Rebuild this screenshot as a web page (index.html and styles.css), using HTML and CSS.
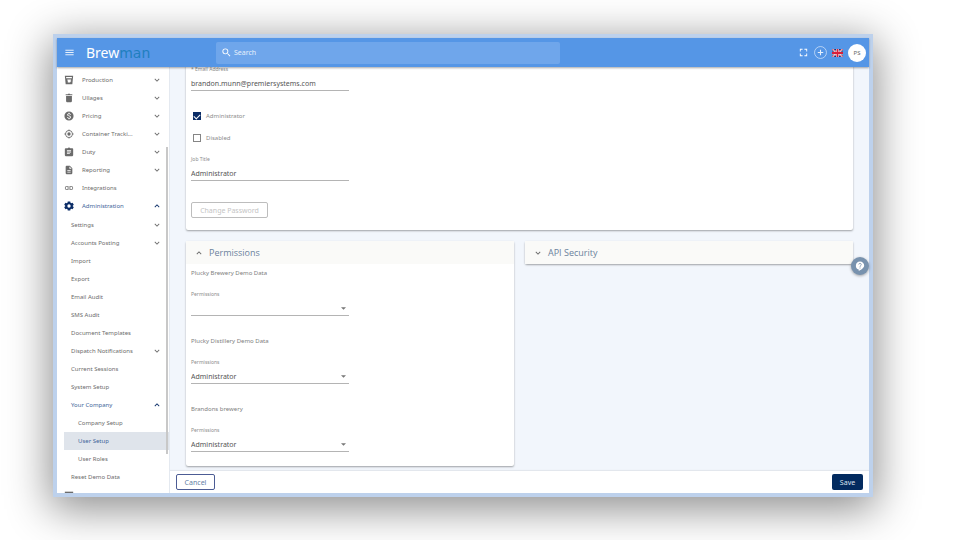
FILE: index.html
```html
<!DOCTYPE html>
<html lang="en">
<head>
  <meta charset="UTF-8">
  <title>Brewman - User Setup</title>
  <link rel="stylesheet" href="styles.css">
</head>
<body>
  <!-- shared chevron shapes -->
  <svg class="defs" aria-hidden="true">
    <symbol id="down" viewBox="0 0 24 24"><path d="M7.4 8.6 12 13.2l4.6-4.6L18 10l-6 6-6-6z"/></symbol>
    <symbol id="up" viewBox="0 0 24 24"><path d="M7.4 15.4 12 10.8l4.6 4.6L18 14l-6-6-6 6z"/></symbol>
  </svg>

  <div class="window">
    <header class="topbar">
      <button class="icon-btn menu" aria-label="Menu">
        <svg viewBox="0 0 24 24"><path d="M3 18h18v-2H3v2zm0-5h18v-2H3v2zm0-7v2h18V6H3z"/></svg>
      </button>
      <a class="logo" href="#">Brew<span>man</span></a>
      <label class="search">
        <svg viewBox="0 0 24 24"><path d="M15.5 14h-.79l-.28-.27A6.47 6.47 0 0 0 16 9.5 6.5 6.5 0 1 0 9.5 16c1.61 0 3.09-.59 4.23-1.57l.27.28v.79l5 4.99L20.49 19l-4.99-5zm-6 0C7.01 14 5 11.99 5 9.5S7.01 5 9.5 5 14 7.01 14 9.5 11.99 14 9.5 14z"/></svg>
        <input type="text" placeholder="Search" aria-label="Search">
      </label>
      <div class="tools">
        <button class="icon-btn" aria-label="Fullscreen">
          <svg viewBox="0 0 24 24"><path d="M4 4h6v2H6v4H4zM14 4h6v6h-2V6h-4zM4 14h2v4h4v2H4zM18 14h2v6h-6v-2h4z"/></svg>
        </button>
        <button class="icon-btn add" aria-label="Add">
          <svg viewBox="0 0 24 24"><circle cx="12" cy="12" r="11" fill="none" stroke="currentColor" stroke-width="1.2"/><path d="M11 7h2v4h4v2h-4v4h-2v-4H7v-2h4z"/></svg>
        </button>
        <button class="icon-btn flag" aria-label="Language">
          <svg viewBox="0 0 22 16">
            <path fill="#1c3578" d="M0 0h22v16H0z"/>
            <path stroke="#fff" stroke-width="3" d="m0 0 22 16M22 0 0 16"/>
            <path stroke="#d8203a" stroke-width="1.5" d="m0 0 22 16M22 0 0 16"/>
            <path stroke="#fff" stroke-width="5.500" d="M11 0v16M0 8h22"/>
            <path stroke="#d8203a" stroke-width="3.600" d="M11 0v16M0 8h22"/>
          </svg>
        </button>
        <button class="avatar">PS</button>
      </div>
    </header>

    <div class="body">
      <nav class="sidebar">
        <a class="item" href="#">
          <svg class="icon" viewBox="0 0 24 24"><path fill-rule="evenodd" d="M2 2h20l-2 20H4L2 2zm3 3 .3 3h13.400L19 5H5zm3 6v2h1v5h6v-2h2v-5H8zm7 2h1v2h-1v-2z"/></svg>
          <span>Production</span><svg class="arrow"><use href="#down"/></svg>
        </a>
        <a class="item" href="#">
          <svg class="icon" viewBox="0 0 24 24"><path d="M5 7h14v13c0 1.100-.9 2-2 2H7c-1.100 0-2-.9-2-2V7zM4 3h5l1-1h4l1 1h5v2.500H4z"/></svg>
          <span>Ullages</span><svg class="arrow"><use href="#down"/></svg>
        </a>
        <a class="item" href="#">
          <svg class="icon" viewBox="0 0 24 24"><path fill-rule="evenodd" d="M12 1a11 11 0 1 0 0 22 11 11 0 0 0 0-22zm1.410 17.090V20h-2.670v-1.930c-1.710-.36-3.160-1.460-3.270-3.400h1.960c.1 1.050.82 1.870 2.650 1.870 1.960 0 2.400-.98 2.400-1.590 0-.83-.44-1.610-2.670-2.140-2.480-.6-4.180-1.620-4.180-3.670 0-1.720 1.390-2.840 3.110-3.210V4h2.670v1.950c1.860.45 2.790 1.860 2.850 3.390H14.300c-.05-1.110-.64-1.870-2.220-1.870-1.500 0-2.400.68-2.400 1.640 0 .84.65 1.390 2.670 1.910s4.180 1.390 4.180 3.910c-.01 1.830-1.380 2.830-3.120 3.160z"/></svg>
          <span>Pricing</span><svg class="arrow"><use href="#down"/></svg>
        </a>
        <a class="item" href="#">
          <svg class="icon" viewBox="0 0 24 24"><path fill-rule="evenodd" d="M12 8a4 4 0 1 0 0 8 4 4 0 0 0 0-8zm8.940 3A8.990 8.990 0 0 0 13 3.060V1h-2v2.060A8.990 8.990 0 0 0 3.060 11H1v2h2.060A8.990 8.990 0 0 0 11 20.940V23h2v-2.060A8.990 8.990 0 0 0 20.940 13H23v-2h-2.060zM12 19a7 7 0 1 1 0-14 7 7 0 0 1 0 14z"/></svg>
          <span>Container Tracki...</span><svg class="arrow"><use href="#down"/></svg>
        </a>
        <a class="item" href="#">
          <svg class="icon" viewBox="0 0 24 24"><path fill-rule="evenodd" d="M4 3h5c.4-1.200 1.500-2 3-2s2.600.8 3 2h5c1.100 0 2 .9 2 2v15c0 1.100-.9 2-2 2H4c-1.100 0-2-.9-2-2V5c0-1.100.9-2 2-2zm3 4v2h10V7H7zm0 4v2h10v-2H7zm0 4v2h7v-2H7z"/></svg>
          <span>Duty</span><svg class="arrow"><use href="#down"/></svg>
        </a>
        <a class="item" href="#">
          <svg class="icon" viewBox="0 0 24 24"><path fill-rule="evenodd" d="M14 2H6c-1.100 0-2 .9-2 2v16c0 1.100.9 2 2 2h12c1.100 0 2-.9 2-2V8l-6-6zm2 16H8v-2h8v2zm0-4H8v-2h8v2zm-3-5V3.500L18.500 9H13z"/></svg>
          <span>Reporting</span><svg class="arrow"><use href="#down"/></svg>
        </a>
        <a class="item" href="#">
          <svg class="icon" viewBox="0 0 24 24"><path d="M3.900 12A3.100 3.100 0 0 1 7 8.900h4V7H7a5 5 0 0 0 0 10h4v-1.900H7A3.100 3.100 0 0 1 3.900 12zM8 13h8v-2H8v2zm9-6h-4v1.900h4a3.100 3.100 0 0 1 0 6.200h-4V17h4a5 5 0 0 0 0-10z"/></svg>
          <span>Integrations</span>
        </a>
        <a class="item open" href="#">
          <svg class="icon" viewBox="0 0 24 24"><path fill-rule="evenodd" d="M9 1h6l.6 3.200 1.800 1L20.500 4l3 5.200-2.500 2v1.600l2.500 2-3 5.200-3.100-1.200-1.800 1L15 23H9l-.6-3.200-1.800-1L3.500 20l-3-5.200 2.500-2v-1.600l-2.500-2 3-5.200 3.100 1.200 1.800-1zM12 8a4 4 0 1 0 0 8 4 4 0 0 0 0-8z"/></svg>
          <span>Administration</span><svg class="arrow"><use href="#up"/></svg>
        </a>
        <div class="submenu">
          <a class="item sub" href="#"><span>Settings</span><svg class="arrow"><use href="#down"/></svg></a>
          <a class="item sub" href="#"><span>Accounts Posting</span><svg class="arrow"><use href="#down"/></svg></a>
          <a class="item sub" href="#"><span>Import</span></a>
          <a class="item sub" href="#"><span>Export</span></a>
          <a class="item sub" href="#"><span>Email Audit</span></a>
          <a class="item sub" href="#"><span>SMS Audit</span></a>
          <a class="item sub" href="#"><span>Document Templates</span></a>
          <a class="item sub" href="#"><span>Dispatch Notifications</span><svg class="arrow"><use href="#down"/></svg></a>
          <a class="item sub" href="#"><span>Current Sessions</span></a>
          <a class="item sub" href="#"><span>System Setup</span></a>
          <a class="item sub open" href="#"><span>Your Company</span><svg class="arrow"><use href="#up"/></svg></a>
          <a class="item leaf" href="#"><span>Company Setup</span></a>
          <a class="item leaf active" href="#"><span>User Setup</span></a>
          <a class="item leaf" href="#"><span>User Roles</span></a>
          <a class="item sub" href="#"><span>Reset Demo Data</span></a>
        </div>
        <a class="item" href="#">
          <svg class="icon" viewBox="0 0 24 24"><path d="M2 4h20v16H2z"/></svg>
          <span>Website</span>
        </a>
        <div class="thumb"></div>
      </nav>

      <div class="page">
        <main class="content">
          <div class="scrolled">
            <section class="card user">
              <div class="field">
                <label for="email">* Email Address</label>
                <input id="email" type="text" value="brandon.munn@premiersystems.com">
              </div>
              <label class="check first"><input type="checkbox" checked>Administrator</label>
              <label class="check"><input type="checkbox">Disabled</label>
              <div class="field">
                <label for="job">Job Title</label>
                <input id="job" type="text" value="Administrator">
              </div>
              <button class="btn change" disabled>Change Password</button>
            </section>

            <div class="columns">
              <section class="card">
                <button class="card-head"><svg class="arrow"><use href="#up"/></svg>Permissions</button>
                <div class="perms">
                  <h3>Plucky Brewery Demo Data</h3>
                  <div class="field">
                    <label for="perm1">Permissions</label>
                    <select id="perm1"><option></option><option>Administrator</option></select>
                  </div>
                  <h3>Plucky Distillery Demo Data</h3>
                  <div class="field">
                    <label for="perm2">Permissions</label>
                    <select id="perm2"><option>Administrator</option></select>
                  </div>
                  <h3>Brandons brewery</h3>
                  <div class="field">
                    <label for="perm3">Permissions</label>
                    <select id="perm3"><option>Administrator</option></select>
                  </div>
                </div>
              </section>
              <section class="card">
                <button class="card-head"><svg class="arrow"><use href="#down"/></svg>API Security</button>
              </section>
            </div>
          </div>
        </main>
        <footer class="actions">
          <button class="btn cancel">Cancel</button>
          <button class="btn save">Save</button>
        </footer>
      </div>
    </div>

    <button class="help" aria-label="Help">
      <svg viewBox="0 0 24 24"><path fill="#fff" d="M12 1a10 10 0 0 0-3 19.500V24c5-2 13-7 13-13A10 10 0 0 0 12 1z"/><path fill="none" stroke="#7892ae" stroke-width="2" d="M9 8.500c0-4 6-4 6 0 0 2.500-3 2.500-3 5.500M12 15.500v2.500"/></svg>
    </button>
  </div>
</body>
</html>
```

FILE: styles.css
```css
* {
  box-sizing: border-box;
}

body {
  margin: 0;
  height: 100vh;
  padding: 34px 87px 43px 53px;
  background: #fff;
  font-family: "Noto Sans", sans-serif;
  font-size: 6px;
  color: #6c6c6c;
  overflow: hidden;
}

button,
input,
select {
  font: inherit;
  color: inherit;
  margin: 0;
  padding: 0;
  border: 0;
  background: none;
}

a {
  color: inherit;
  text-decoration: none;
}

svg {
  fill: currentColor;
  display: block;
}

.defs {
  position: absolute;
  width: 0;
  height: 0;
}

.window {
  position: relative;
  height: 100%;
  display: flex;
  flex-direction: column;
  border: 4px solid #bdd1ec;
  box-shadow: 0 9px 40px 3px rgba(0, 0, 0, 0.45);
}

/* top bar */
.topbar {
  position: relative;
  z-index: 2;
  flex: none;
  display: flex;
  align-items: center;
  height: 29px;
  padding: 0 3px 0 7px;
  background: #5596e6;
  color: #fff;
  box-shadow: 0 1px 2px rgba(0, 0, 0, 0.35);
}

.icon-btn svg {
  width: 11px;
  height: 11px;
}

.menu,
.add {
  color: #e6f0fc;
}

.logo {
  width: 130px;
  margin-left: 11px;
  font-size: 14px;
  line-height: 20px;
}

.logo span {
  font-family: "DejaVu Sans", sans-serif;
  color: #1f7fbf;
}

.search {
  display: flex;
  align-items: center;
  gap: 2px;
  flex: 0 1 344px;
  height: 22px;
  padding-left: 5px;
  border-radius: 2px;
  background: #6fa6eb;
}

.search svg {
  width: 11px;
  height: 11px;
}

.search input {
  flex: 1;
  font-size: 7px;
  outline: none;
}

.search input::placeholder {
  color: #e6f0fc;
  opacity: 1;
}

.tools {
  display: flex;
  align-items: center;
  gap: 5px;
  margin-left: auto;
}

.add svg {
  width: 13px;
  height: 13px;
}

.flag svg {
  width: 11px;
  height: 8px;
}

.avatar {
  width: 18px;
  height: 18px;
  border-radius: 50%;
  background: #fff;
  color: #666;
}

.body {
  flex: 1;
  display: flex;
  min-height: 0;
}

/* side menu */
.sidebar {
  position: relative;
  flex: none;
  width: 113px;
  padding: 4px 0 0 7px;
  background: #fff;
  border-right: 1px solid #e4e9f0;
  overflow: hidden;
}

.item {
  display: flex;
  align-items: center;
  height: 18px;
  padding-right: 7px;
  line-height: 10px;
}

.item .icon {
  width: 10px;
  height: 10px;
  margin-right: 8px;
  color: #6b6b6b;
}

.arrow {
  width: 10px;
  height: 10px;
}

.item .arrow {
  margin-left: auto;
}

.submenu {
  margin-top: 1px;
}

.sub {
  padding-left: 7px;
}

.leaf {
  padding-left: 14px;
}

.open {
  color: #41659a;
}

.open .icon,
.open .arrow {
  color: #0a2c66;
}

.active {
  background: #dfe4eb;
  color: #41659a;
}

.thumb {
  position: absolute;
  top: 80px;
  right: 1px;
  width: 2px;
  height: 307px;
  background: #c8c8c8;
}

/* page */
.page {
  flex: 1;
  display: flex;
  flex-direction: column;
  min-width: 0;
  background: #f2f6fc;
}

.content {
  flex: 1;
  min-height: 0;
  padding: 0 16px;
  overflow: hidden;
}

.scrolled {
  margin-top: -10px;
}

.card {
  background: #fff;
  border-radius: 2px;
  box-shadow: 0 1px 2px rgba(0, 0, 0, 0.35);
}

.user {
  padding: 8px 5px 12px;
}

.columns {
  display: grid;
  grid-template-columns: 1fr 1fr;
  align-items: start;
  gap: 11px;
  margin-top: 11px;
}

.field {
  width: 158px;
}

.field label {
  display: block;
  margin-bottom: 3px;
  font-size: 5px;
  line-height: 8px;
  color: #8c8c8c;
}

.field input,
.field select {
  display: block;
  width: 100%;
  height: 15px;
  border-bottom: 1px solid #b4b4b4;
  border-radius: 0;
  font-size: 7px;
  color: #555;
  outline: none;
}

.field select {
  appearance: none;
  background: url("data:image/svg+xml,%3Csvg xmlns='http://www.w3.org/2000/svg' viewBox='0 0 10 5'%3E%3Cpath fill='%23777' d='M0 0h10L5 5z'/%3E%3C/svg%3E") right 3px center / 5px 3px no-repeat;
}

.check {
  display: flex;
  align-items: center;
  gap: 5px;
  height: 10px;
  margin-bottom: 12px;
  padding-left: 2px;
  color: #8c8c8c;
}

.first {
  margin-top: 20px;
}

.check input {
  appearance: none;
  width: 8px;
  height: 8px;
  border: 1px solid #858585;
}

.check input:checked {
  display: grid;
  place-items: center;
  border-color: #0a2c66;
  background: #0a2c66;
}

.check input:checked::before {
  content: "";
  width: 5px;
  height: 3px;
  margin-bottom: 1px;
  border: solid #fff;
  border-width: 0 0 1px 1px;
  transform: rotate(-45deg);
}

.btn {
  height: 16px;
  border-radius: 2px;
}

.change {
  width: 77px;
  display: block;
  margin-top: 21px;
  border: 1px solid #bdbdbd;
  font-size: 7px;
  color: #c4c4c4;
}

.card-head {
  display: flex;
  align-items: center;
  gap: 5px;
  width: 100%;
  height: 23px;
  padding-left: 8px;
  background: #fafaf8;
  font-family: "Open Sans", "Noto Sans", sans-serif;
  font-size: 9px;
  color: #6b829d;
}

.card-head .arrow {
  color: #666;
}

.perms {
  padding: 4px 5px 14px;
}

.perms h3 {
  margin: 20px 0 12px;
  font-size: 6px;
  font-weight: 400;
  line-height: 10px;
  color: #808080;
}

.perms h3:first-child {
  margin-top: 0;
}

.actions {
  flex: none;
  display: flex;
  align-items: center;
  justify-content: space-between;
  height: 22px;
  padding: 0 6px;
  background: #fff;
  box-shadow: 0 -1px 1px rgba(0, 0, 0, 0.06);
}

.cancel {
  width: 39px;
  border: 1px solid #4c5c94;
  font-size: 7px;
  color: #6480a5;
}

.save {
  width: 31px;
  background: #032b5f;
  color: #dbe3ee;
  font-size: 7px;
}

.help {
  position: absolute;
  z-index: 3;
  top: 219px;
  right: 0;
  display: grid;
  place-items: center;
  width: 18px;
  height: 18px;
  border-radius: 50%;
  background: #7892ae;
  box-shadow: 0 1px 3px rgba(0, 0, 0, 0.35);
}

.help svg {
  width: 10px;
  height: 10px;
}
```
